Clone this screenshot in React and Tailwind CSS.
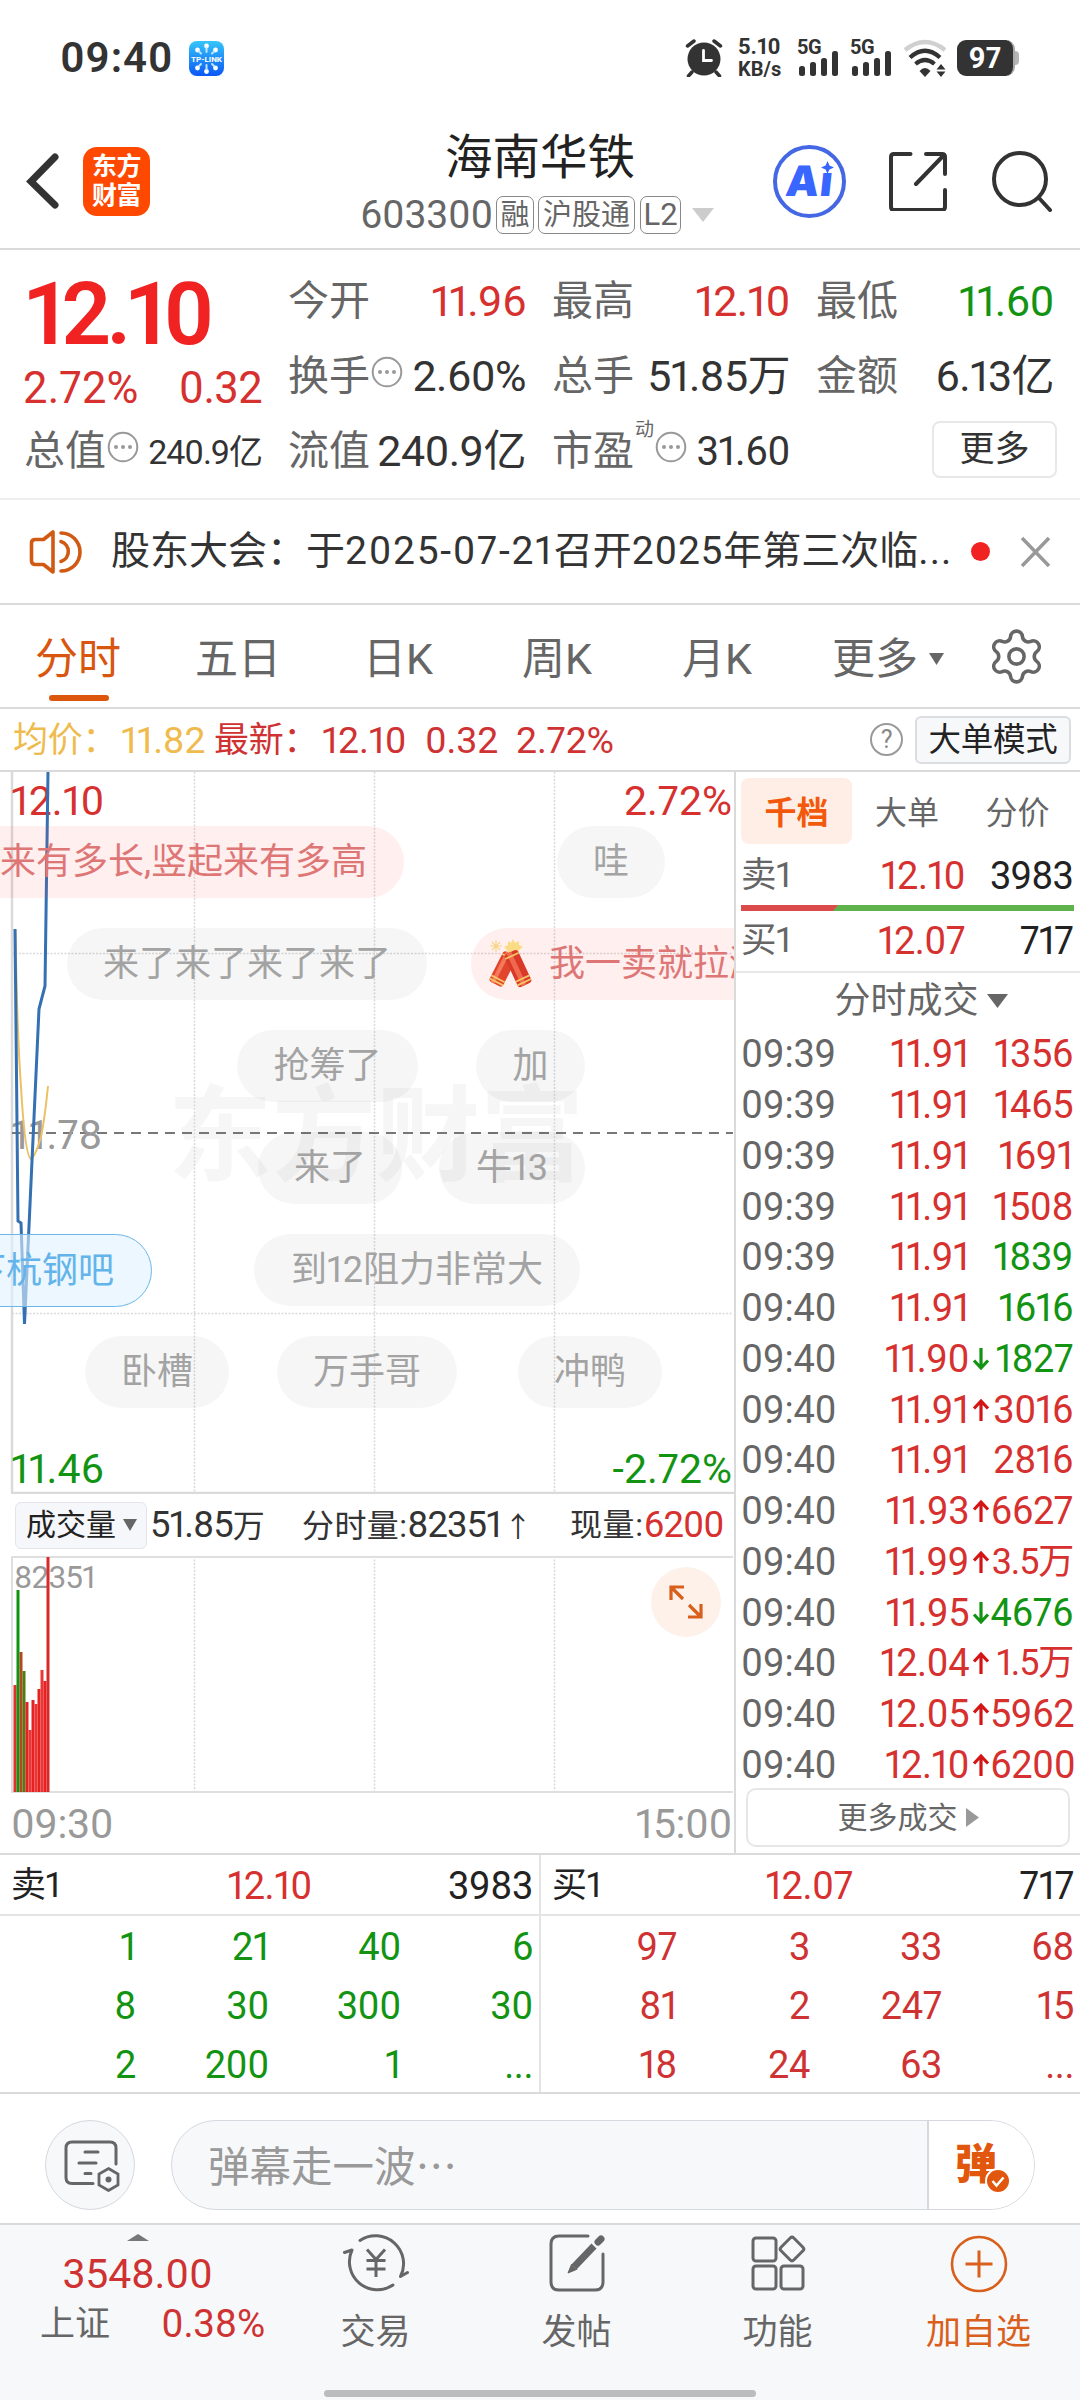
import { Settings } from 'lucide-react';

const STATS = [
  [
    { label: '今开', value: '11.96', color: 'text-[#d6302f]' },
    { label: '换手', value: '2.60%', color: 'text-[#333]', more: true },
    { label: '流值', value: '240.9亿', color: 'text-[#333]' },
  ],
  [
    { label: '最高', value: '12.10', color: 'text-[#d6302f]' },
    { label: '总手', value: '51.85万', color: 'text-[#333]' },
  ],
  [
    { label: '最低', value: '11.60', color: 'text-[#129412]' },
    { label: '金额', value: '6.13亿', color: 'text-[#333]' },
  ],
];

const TRADES = [
  ['09:39', '11.91', '', '1356', 'up'],
  ['09:39', '11.91', '', '1465', 'up'],
  ['09:39', '11.91', '', '1691', 'up'],
  ['09:39', '11.91', '', '1508', 'up'],
  ['09:39', '11.91', '', '1839', 'down'],
  ['09:40', '11.91', '', '1616', 'down'],
  ['09:40', '11.90', 'down', '1827', 'down'],
  ['09:40', '11.91', 'up', '3016', 'up'],
  ['09:40', '11.91', '', '2816', 'up'],
  ['09:40', '11.93', 'up', '6627', 'up'],
  ['09:40', '11.99', 'up', '3.5万', 'up'],
  ['09:40', '11.95', 'down', '4676', 'down'],
  ['09:40', '12.04', 'up', '1.5万', 'up'],
  ['09:40', '12.05', 'up', '5962', 'up'],
  ['09:40', '12.10', 'up', '6200', 'up'],
];

const SELL_QUEUE = ['1', '21', '40', '6', '8', '30', '300', '30', '2', '200', '1', '...'];
const BUY_QUEUE = ['97', '3', '33', '68', '81', '2', '247', '15', '18', '24', '63', '...'];

// volume bars: [top, color], one per minute
const VOLUME = [
  [129, '#e03030'], [34, '#109410'], [96, '#b04a22'], [115, '#4f7d12'], [146, '#e52222'], [174, '#ec3535'],
  [144, '#e52222'], [148, '#ec3535'], [133, '#e52222'], [114, '#ec3535'], [125, '#e52222'], [1, '#d82a2a'],
];

const BUBBLES = [
  { text: '哇', pos: 'left-[557px] top-[54px] w-[108px]' },
  { text: '来了来了来了来了', pos: 'left-[67px] top-[156px] w-[360px]' },
  { text: '抢筹了', pos: 'left-[237px] top-[258px] w-[181px]' },
  { text: '加', pos: 'left-[476px] top-[258px] w-[109px]' },
  { text: '来了', pos: 'left-[258px] top-[360px] w-[144px]' },
  { text: '牛13', pos: 'left-[439px] top-[360px] w-[146px]' },
  { text: '到12阻力非常大', pos: 'left-[254px] top-[462px] w-[326px]' },
  { text: '卧槽', pos: 'left-[85px] top-[564px] w-[144px]' },
  { text: '万手哥', pos: 'left-[277px] top-[564px] w-[180px]' },
  { text: '冲鸭', pos: 'left-[518px] top-[564px] w-[144px]' },
];

function Dots() {
  return (
    <svg className="w-[32px] h-[32px] ml-[1px] mb-[9px] shrink-0" viewBox="0 0 32 32">
      <circle cx="16" cy="16" r="14.300" fill="none" stroke="#999" strokeWidth="2" />
      <circle cx="9" cy="16" r="2" fill="#999" />
      <circle cx="16" cy="16" r="2" fill="#999" />
      <circle cx="23" cy="16" r="2" fill="#999" />
    </svg>
  );
}

function Triangle({ className, points }) {
  return (
    <svg className={className} viewBox="0 0 10 10" preserveAspectRatio="none">
      <polygon points={points} fill="currentColor" />
    </svg>
  );
}

function Signal() {
  return (
    <div className="flex flex-col w-[53px] h-[38px] relative">
      <span className="text-[20px] font-bold leading-[16px] tracking-[-0.5px]">5G</span>
      <svg className="absolute left-[2px] top-[12px] w-[42px] h-[26px]" viewBox="0 0 42 26">
        <rect x="0" y="15" width="6" height="10" rx="2.5" fill="#333" />
        <rect x="11" y="11" width="6" height="14" rx="2.5" fill="#333" />
        <rect x="22" y="7" width="6" height="18" rx="2.5" fill="#333" />
        <rect x="33" y="0" width="6" height="25" rx="2.5" fill="#333" />
      </svg>
    </div>
  );
}

function StatusBar() {
  return (
    <div className="flex h-[116px] items-center pl-[60px] text-[#333]">
      <span className="w-[129px] text-[42px] font-semibold tracking-[0.8px]">09:40</span>
      <svg className="w-[35px] h-[35px]" viewBox="0 0 35 35">
        <defs>
          <linearGradient id="tp" x1="0" y1="0" x2="0" y2="1">
            <stop offset="0" stopColor="#35c6fb" />
            <stop offset="1" stopColor="#0b57f5" />
          </linearGradient>
        </defs>
        <rect width="35" height="35" rx="8" fill="url(#tp)" />
        <g fill="#fff">
          <circle cx="17.500" cy="5" r="2.400" />
          <circle cx="8.500" cy="9" r="2.400" />
          <circle cx="26.500" cy="9" r="2.400" />
          <circle cx="8.500" cy="27" r="2.400" />
          <circle cx="26.500" cy="27" r="2.400" />
          <circle cx="17.500" cy="30.500" r="2.400" />
        </g>
        <g stroke="#bfe6ff" strokeWidth="2" strokeLinecap="round">
          <path d="M17.500 7v4M10 10.500l2 2M25 10.500l-2 2M10 25l2-2M25 25l-2-2M17.500 28v-4" />
        </g>
        <text x="17.500" y="20.500" textAnchor="middle" textLength="31" lengthAdjust="spacingAndGlyphs" fontSize="6.500" fontWeight="700" fill="#fff">TP-LINK</text>
      </svg>
      <div className="flex items-center ml-[461px] h-[38px]">
        <svg className="w-[38px] h-[38px]" viewBox="0 0 38 38" fill="none" stroke="#333" strokeLinecap="round">
          <circle cx="19" cy="20" r="16.500" fill="#333" stroke="none" />
          <path d="M2.500 7L9 2M35.500 7L29 2M7 33l-3.500 4M31 33l3.500 4" strokeWidth="3.500" />
          <path d="M18.500 11.500v10h8" stroke="#fff" strokeWidth="2.800" />
        </svg>
        <div className="flex flex-col ml-[15px] w-[59px] text-[22px] font-bold leading-[23px]">
          <span>5.10</span>
          <span className="text-[20px]">KB/s</span>
        </div>
        <Signal />
        <Signal />
        <svg className="w-[46px] h-[38px]" viewBox="0 0 46 38" fill="none" stroke="#333" strokeWidth="4.200">
          <path d="M2 11Q22 -5 42 11" stroke="#d0d0d0" />
          <path d="M7 18.500Q22 5 37 18.500" />
          <path d="M12.500 25Q22 17 31.500 25" />
          <path d="M16.500 32Q22 26 27.500 32L22 38z" fill="#333" stroke="none" />
          <path d="M33.500 30.500h9L38 25zM33.500 32.500h9L38 38z" fill="#333" stroke="none" />
        </svg>
        <div className="flex items-center ml-[8px]">
          <div className="flex items-center justify-center w-[58px] h-[36px] rounded-[9px] bg-[#333] border-r-2 border-[#aaa] text-white text-[29px] font-bold">97</div>
          <div className="w-[4px] h-[14px] rounded-r-[4px] bg-[#b5b5b5]" />
        </div>
      </div>
    </div>
  );
}

function Header() {
  return (
    <header className="flex items-center h-[134px] border-b-2 border-[#dadada] pl-[26px] pb-[2px]">
      <svg className="w-[34px] h-[58px]" viewBox="0 0 34 58" fill="none" stroke="#333" strokeWidth="7" strokeLinecap="round">
        <path d="M29 5L5 29.500L29 53" />
      </svg>
      <div className="flex flex-col items-center justify-center ml-[23px] w-[67px] h-[69px] rounded-[14px] bg-[#ff4800] text-white text-[25px] font-bold leading-[29px] tracking-[-0.5px]">
        <span>东方</span>
        <span>财富</span>
      </div>
      <div className="flex flex-col items-start ml-[154px] w-[464px] -mt-[2px]">
        <h1 className="ml-[141px] text-[47.500px] leading-[66px] text-[#222]">海南华铁</h1>
        <div className="flex items-center ml-[56px] h-[44px] pt-[4px] text-[#666]">
          <span className="mr-[4px] w-[132px] text-[39px] tracking-[-0.2px]">603300</span>
          <span className="mr-[4px] w-[38px] py-[2px] border border-[#888] rounded-[7px] text-center text-[29px] leading-[32px]">融</span>
          <span className="mr-[5px] w-[97px] py-[2px] border border-[#888] rounded-[7px] text-center text-[29px] leading-[32px]">沪股通</span>
          <span className="w-[41px] py-[2px] border border-[#888] rounded-[7px] text-center text-[31px] leading-[32px]">L2</span>
          <Triangle className="ml-[11px] w-[22px] h-[14px] text-[#ccc]" points="0,0 10,0 5,10" />
        </div>
      </div>
      <div className="relative flex items-center justify-center ml-[5px] w-[73px] h-[73px] rounded-full border-4 border-[#4468e4] text-[#3866ff]">
        <span className="font-[Inter] text-[42px] font-black tracking-[1px] -skew-x-6">Aı</span>
        <Triangle className="absolute right-[8px] top-[12px] w-[13px] h-[13px]" points="5,0 6.5,3.5 10,5 6.5,6.500 5,10 3.500,6.500 0,5 3.500,3.500" />
      </div>
      <svg className="ml-[42px] w-[60px] h-[60px]" viewBox="0 0 60 60" fill="none" stroke="#333" strokeWidth="4" strokeLinecap="round" strokeLinejoin="round">
        <path d="M22.500 3H6Q3 3 3 6v50q0 3 3 3h48q3 0 3-3V39M38 3h16q3 0 3 3v17M55 5L28 33" />
      </svg>
      <svg className="ml-[43px] w-[62px] h-[62px]" viewBox="0 0 62 62" fill="none" stroke="#333" strokeWidth="4" strokeLinecap="round">
        <circle cx="29" cy="29" r="26" />
        <path d="M48 48l11 12" />
      </svg>
    </header>
  );
}

function Quote() {
  return (
    <section className="grid grid-cols-[237px_236px_236px_236px] gap-x-[28px] h-[250px] pl-[25px] pt-[14px] border-b-2 border-[#eee]">
      <div className="flex flex-col">
        <div className="flex items-center h-[100px] text-[87px] font-semibold tracking-[-4.500px] text-[#f12222]">12.10</div>
        <div className="flex items-center justify-between h-[50px] -ml-[2px] text-[43.500px] text-[#d6302f]">
          <span className="tracking-[0.2px]">2.72%</span>
          <span className="tracking-[-0.6px]">0.32</span>
        </div>
        <div className="flex items-center h-[75px]">
          <span className="-ml-[1px] text-[41px] text-[#666]">总值</span>
          <Dots />
          <span className="ml-auto text-[34px] tracking-[-1.100px] text-[#333]">240.9亿</span>
        </div>
      </div>
      {STATS.map((col, i) => (
        <div key={i} className="flex flex-col whitespace-nowrap">
          {col.map((s) => (
            <div key={s.label} className="flex items-center h-[75px]">
              <span className="-ml-[2px] text-[41px] text-[#666]">{s.label}</span>
              {s.more && <Dots />}
              <span className={`ml-auto text-[43px] tracking-[-0.6px] ${s.color}`}>{s.value}</span>
            </div>
          ))}
          {i === 1 && (
            <div className="flex items-center h-[75px]">
              <span className="-ml-[2px] text-[41px] text-[#666]">市盈</span>
              <span className="self-start mt-[6px] ml-[1px] text-[19px] text-[#666]">动</span>
              <Dots />
              <span className="ml-auto text-[40px] tracking-[-0.6px] text-[#333]">31.60</span>
            </div>
          )}
          {i === 2 && (
            <div className="flex items-center justify-center ml-auto mt-[7px] -mr-[3px] w-[125px] h-[57px] border-2 border-[#e8e8e8] rounded-[8px] text-[35px] text-[#333]">更多</div>
          )}
        </div>
      ))}
    </section>
  );
}

function Notice() {
  return (
    <section className="flex items-center h-[105px] border-b-2 border-[#dadada] pl-[28px]">
      <svg className="w-[54px] h-[48px]" viewBox="0 0 54 48" fill="none" stroke="#d05a14" strokeWidth="3.600" strokeLinecap="round" strokeLinejoin="round">
        <path d="M25 4v40l-9.500-7.500H7.500Q3.500 36.500 3.500 33V15Q3.500 11.500 7.500 11.500H15.500z" />
        <path d="M33 13.500a10.500 10.500 0 0 1 0 20M33 5a19 19 0 0 1 0 38" />
      </svg>
      <span className="ml-[29px] w-[840px] whitespace-nowrap text-[39px] text-[#333]">
        股东大会：于<span className="tracking-[1.700px]">2025-07-21</span>召开<span className="tracking-[0.8px]">2025</span>年第三次临<span className="tracking-[1px]">...</span>
      </span>
      <span className="ml-[20px] w-[19px] h-[19px] rounded-full bg-[#f12222]" />
      <svg className="ml-[28px] w-[34px] h-[34px]" viewBox="0 0 34 34" stroke="#999" strokeWidth="3.500">
        <path d="M4 3L31 31M31 3L4 31" />
      </svg>
    </section>
  );
}

function PeriodTabs() {
  return (
    <nav className="flex items-center h-[104px] border-b-2 border-[#dadada] pl-[35px] pt-[6px] text-[43px] text-[#666]">
      <div className="relative w-[160px] text-[#d9560f]">
        分时
        <span className="absolute left-[14px] -bottom-[20px] w-[60px] h-[6px] rounded-full bg-[#dd560d]" />
      </div>
      <span className="w-[168px]">五日</span>
      <span className="w-[159px]">日K</span>
      <span className="w-[160px]">周K</span>
      <span className="w-[150px]">月K</span>
      <span>更多</span>
      <Triangle className="ml-[11px] w-[15px] h-[12px]" points="0,0 10,0 5,10" />
      <Settings className="ml-[42px] -mt-[6px] w-[61px] h-[61px]" strokeWidth={1.4} />
    </nav>
  );
}

function InfoLine() {
  return (
    <div className="flex items-center h-[63px] border-b-2 border-[#dadada] pl-[13px] pr-[9px] text-[37.500px] tracking-[-0.2px] whitespace-nowrap">
      <span className="w-[108px] pt-[2px] text-[35px] text-[#efbb4e]">均价：</span>
      <span className="w-[93px] pt-[2px] text-[#efbb4e]">11.82</span>
      <span className="w-[108px] pt-[2px] text-[35px] text-[#cf3232]">最新：</span>
      <span className="w-[103px] pt-[2px] text-[#cf3232]">12.10</span>
      <span className="w-[91px] pt-[2px] text-[#cf3232]">0.32</span>
      <span className="pt-[2px] text-[#cf3232]">2.72%</span>
      <div className="flex items-center justify-center ml-auto mr-[12px] w-[33px] h-[33px] rounded-full border-[2.5px] border-[#999] text-[25px] text-[#888]">?</div>
      <div className="flex items-center justify-center w-[156px] h-[48px] pt-[2px] rounded-[6px] border-2 border-[#dcdde0] bg-[#f7f8fa] text-[32.500px] text-[#222]">大单模式</div>
    </div>
  );
}

function Firecracker() {
  return (
    <svg className="w-[48px] h-[50px]" viewBox="0 0 48 50">
      <g stroke="#f6d58a" strokeWidth="1.200">
        <path d="M10 1v12M4 7h12M6 3l8 8M14 3l-8 8" />
      </g>
      <polygon points="27,0 29,4 33,2 33,6 37,8 33,11 32,15 27,14 22,15 21,11 18,8 22,6 22,2 25,4" fill="#fbdc85" />
      <g transform="rotate(27 17 30)">
        <rect x="9.500" y="13" width="15" height="34" rx="3" fill="#e2452e" />
        <rect x="12" y="13" width="4" height="34" fill="#f4795b" />
        <path d="M9.500 17h15M9.500 41h15M9.500 44.500h15" stroke="#f4c766" strokeWidth="1.800" />
      </g>
      <g transform="rotate(-25 31 30)">
        <rect x="24.500" y="12" width="15" height="36" rx="3" fill="#d93a28" />
        <rect x="28" y="12" width="5" height="36" fill="#f0694e" />
        <path d="M24.500 16h15M24.500 41h15M24.500 45h15" stroke="#f4c766" strokeWidth="1.800" />
      </g>
    </svg>
  );
}

function PriceChart() {
  return (
    <div className="relative h-[722px] overflow-hidden text-[41px]">
      <span className="absolute left-[168px] top-[307px] text-[104px] font-bold leading-[118px] text-[#f6f6f6]">东方财富</span>
      <svg className="absolute left-0 top-0 w-[735px] h-[722px]" viewBox="0 0 735 722" fill="none">
        <path d="M194.500 0v720M374.500 0v720M554.500 0v720M12 181.500h721M12 541.500h721" stroke="#d9d9d9" strokeWidth="1.500" strokeDasharray="2 1.500" />
        <path d="M12 0v720M11 721h724" stroke="#dadada" strokeWidth="2.500" />
        <path d="M12 361h721" stroke="#777" strokeWidth="1.800" strokeDasharray="10 7" />
      </svg>
      <span className="absolute left-[11px] top-[9px] text-[#d6302f]">12.10</span>
      <span className="absolute right-[2px] top-[9px] text-[#d6302f]">2.72%</span>
      <span className="absolute left-[11px] top-[343px] text-[#999]">11.78</span>
      <span className="absolute left-[11px] top-[677px] text-[#129412]">11.46</span>
      <span className="absolute right-[2px] top-[677px] text-[#129412]">-2.72%</span>
      <svg className="absolute left-0 top-0 w-[735px] h-[722px]" viewBox="0 0 735 722" fill="none">
        <path d="M15.500 158Q17 260 21 315Q25 384 31 387Q35 385 41 365Q45 345 48 314" stroke="#ecc163" strokeWidth="2" />
        <path d="M15 157L18 449L21 451L24.500 552L39 237L45 214L48 0" stroke="#3570b2" strokeWidth="3" />
      </svg>

      {/* danmaku layer */}
      <div className="absolute left-0 top-[54px] w-[404px] h-[72px] flex items-center rounded-r-full bg-[#fa5050]/[0.09] text-[36px] text-[#de7676] whitespace-nowrap">来有多长,竖起来有多高</div>
      <div className="absolute left-[471px] top-[156px] w-[330px] h-[72px] flex items-center gap-[15px] pl-[15px] rounded-full bg-[#fa5050]/[0.09] text-[36px] text-[#de7676] whitespace-nowrap">
        <Firecracker />
        我一卖就拉涨
      </div>
      <div className="absolute -left-[80px] top-[462px] w-[232px] h-[73px] flex items-center justify-end pr-[37px] rounded-full border-[1.500px] border-[#6bb7ea] bg-[#dff2ff]/60 text-[36px] text-[#62b4ea] whitespace-nowrap">下杭钢吧</div>
      {BUBBLES.map((b) => (
        <div key={b.text + b.pos} className={`absolute h-[72px] flex items-center justify-center rounded-full bg-black/[0.036] text-[36px] text-[#a3a3a3] whitespace-nowrap ${b.pos}`}>
          {b.text}
        </div>
      ))}
    </div>
  );
}

function VolumeChart() {
  return (
    <>
      <div className="flex items-center h-[62px] pl-[15px] text-[36.500px] tracking-[-1px] whitespace-nowrap text-[#333]">
        <div className="flex items-center w-[132px] h-[47px] pl-[10px] rounded-[6px] border border-[#e3e5ea] bg-[#f6f7fa] text-[30px] tracking-[0px] text-[#222]">
          成交量
          <Triangle className="ml-[7px] w-[14px] h-[12px] text-[#666]" points="0,0 10,0 5,10" />
        </div>
        <span className="ml-[3px] w-[152px]">51.85<span className="text-[32px]">万</span></span>
        <span className="w-[268px]"><span className="text-[32px] tracking-[0.4px]">分时量:</span>82351<span className="ml-[3px] text-[28px]">↑</span></span>
        <span className="text-[32px] tracking-[0.6px]">现量:</span>
        <span className="text-[#d6302f]">6200</span>
      </div>
      <div className="relative h-[237px]">
        <svg className="absolute left-0 top-0 w-[735px] h-[237px]" viewBox="0 0 735 237">
          <path d="M194.500 0v236M374.500 0v236M554.500 0v236" stroke="#d9d9d9" strokeWidth="1.500" strokeDasharray="2 1.500" />
          <path d="M12 1h721M12 0v236M11 236h722" stroke="#dfdfdf" strokeWidth="2" fill="none" />
        </svg>
        <span className="absolute left-[14px] top-[6px] text-[31.500px] tracking-[-0.8px] text-[#999]">82351</span>
        <svg className="absolute left-0 top-0 w-[735px] h-[237px]" viewBox="0 0 735 237">
          {VOLUME.map(([top, color], i) => (
            <rect key={i} x={13.5 + i * 3} y={top} width="3" height={236 - top} fill={color} />
          ))}
        </svg>
        <div className="absolute right-[13px] top-[11px] w-[70px] h-[70px] rounded-full bg-[#fdf1ea] flex items-center justify-center">
          <svg className="w-[36px] h-[36px]" viewBox="0 0 36 36" fill="none" stroke="#d9601c" strokeWidth="3.200">
            <path d="M3 16V3h13M3 3l12 12M33 20v13H20M33 33L21 21" />
          </svg>
        </div>
      </div>
      <div className="flex items-center justify-between h-[60px] pt-[2px] pl-[11px] pr-[2px] text-[41px] tracking-[-0.4px] text-[#999]">
        <span>09:30</span>
        <span>15:00</span>
      </div>
    </>
  );
}

function Arrow({ dir }) {
  if (!dir) return <span className="w-[18px]" />;
  return (
    <svg className={`shrink-0 w-[18px] h-[24px] ${dir === 'up' ? '' : 'rotate-180'}`} viewBox="0 0 18 24" fill="none" stroke={dir === 'up' ? '#d41515' : '#129412'} strokeWidth="3.200">
      <path d="M9 23V3M2 10.500L9 3l7 7.500" />
    </svg>
  );
}

function SidePanel() {
  return (
    <aside className="flex flex-col w-[346px] border-l-2 border-[#dadada] text-[38px] tracking-[-0.5px]">
      <div className="flex items-center mt-[6px] ml-[5px] h-[66px] text-[32px] tracking-[0px] text-[#666]">
        <span className="flex items-center justify-center w-[111px] h-[66px] pt-[3px] rounded-[8px] bg-[#feeee6] font-bold text-[#f2590c]">千档</span>
        <span className="w-[110px] pt-[3px] text-center">大单</span>
        <span className="w-[111px] pt-[3px] text-center">分价</span>
      </div>
      <div className="flex items-center h-[58px] mt-[3px] pl-[5px] pr-[7px]">
        <span className="text-[35.500px] text-[#666]">卖1</span>
        <span className="ml-auto text-[#d6302f]">12.10</span>
        <span className="w-[108px] text-right tracking-[-0.9px] text-[#222]">3983</span>
      </div>
      <svg className="ml-[5px] w-[333px] h-[6px]" viewBox="0 0 333 6">
        <rect width="333" height="6" fill="#5fb24c" />
        <polygon points="0,0 97,0 92,6 0,6" fill="#db4b4b" />
      </svg>
      <div className="flex items-center h-[60px] pl-[5px] pr-[7px]">
        <span className="text-[35.500px] text-[#666]">买1</span>
        <span className="ml-auto text-[#d6302f]">12.07</span>
        <span className="w-[108px] text-right tracking-[-0.9px] text-[#222]">717</span>
      </div>
      <div className="flex items-center justify-center h-[60px] pl-[26px] pb-[2px] border-t-2 border-[#e8e8e8] text-[36px] tracking-[0px] text-[#666]">
        分时成交
        <Triangle className="ml-[8px] w-[21px] h-[14px]" points="0,0 10,0 5,10" />
      </div>
      <div className="flex flex-col -mt-[2px]">
        {TRADES.map(([time, price, dir, vol, side], i) => (
          <div key={i} className="flex items-center h-[50.75px] pl-[5px] pr-[7px] whitespace-nowrap">
            <span className="tracking-[-0.2px] text-[#666]">{time}</span>
            <span className="ml-auto text-[#d6302f]">{price}</span>
            <div className="flex ml-[3px] items-center w-[101px]">
              <Arrow dir={dir} />
              <span className={`ml-auto ${vol.includes('万') ? 'text-[36px] tracking-[-1.200px]' : ''} ${side === 'up' ? 'text-[#d6302f]' : 'text-[#129412]'}`}>{vol}</span>
            </div>
          </div>
        ))}
      </div>
      <div className="flex items-center justify-center ml-[10px] -mt-[2px] w-[324px] h-[59px] rounded-[10px] border-2 border-[#e6e6e6] text-[30px] tracking-[0px] text-[#666]">
        更多成交
        <Triangle className="ml-[8px] w-[13px] h-[19px] text-[#999]" points="0,0 10,5 0,10" />
      </div>
    </aside>
  );
}

function Queue({ label, price, total, items, color, className }) {
  return (
    <div className={`text-[38px] tracking-[-0.4px] ${className}`}>
      <div className="flex items-center h-[61px] pt-[2px] pl-[11px] border-b-2 border-[#e4e4e4] text-[#222]">
        <span className="w-[150px] text-[35px]">{label}</span>
        <span className="w-[151px] text-right text-[#d6302f]">{price}</span>
        <span className="ml-auto pr-[6px]">{total}</span>
      </div>
      <div className={`grid grid-cols-[136px_133px_132px_1fr] h-[179px] pt-[1px] pr-[6px] items-center text-right ${color}`}>
        {items.map((n, i) => <span key={i}>{n}</span>)}
      </div>
    </div>
  );
}

function CommentBar() {
  return (
    <div className="flex items-center h-[129px] pl-[45px] pt-[13px]">
      <div className="flex items-center justify-center w-[90px] h-[90px] rounded-full border-[1.500px] border-[#d5d8de] bg-[#f7f8fa]">
        <svg className="w-[58px] h-[54px] ml-[4px]" viewBox="0 0 58 54" fill="none" stroke="#666" strokeWidth="3" strokeLinecap="round">
          <path d="M30 45.500H9Q3 45.500 3 39.500V10Q3 4 9 4h38q6 0 6 6v16" />
          <path d="M22 14h13M16 25h17M22 35.500h6" />
          <path d="M45.500 30.500l9.500 5.500v11l-9.500 5.500-9.500-5.500v-11z" strokeWidth="2.800" />
          <circle cx="45.500" cy="41.500" r="3" fill="#666" stroke="none" />
        </svg>
      </div>
      <div className="flex items-center ml-[36px] w-[864px] h-[90px] rounded-full border-[1.500px] border-[#d5d8de] bg-[#f7f8fa] overflow-hidden">
        <span className="pl-[36px] pt-[2px] flex-1 text-[41.500px] text-[#999]">弹幕走一波<span className="font-['Noto_Sans_CJK_SC']">…</span></span>
        <div className="relative w-[107px] h-[90px] border-l-2 border-[#d5d8de] bg-white flex items-center pl-[26px]">
          <span className="text-[42px] font-black text-[#e2570e]">弹</span>
          <svg className="absolute left-[56px] top-[48px] w-[26px] h-[26px]" viewBox="0 0 26 26">
            <circle cx="13" cy="13" r="12" fill="#e2570e" stroke="#fff" strokeWidth="2" />
            <path d="M7.500 13l4 4.500 7-8" fill="none" stroke="#fff" strokeWidth="2.500" />
          </svg>
        </div>
      </div>
    </div>
  );
}

function NavItem({ label, className, children }) {
  return (
    <div className={`flex flex-col items-center w-[201px] pt-[7px] text-[35px] ${className}`}>
      <svg className="w-[66px] h-[62px]" viewBox="0 0 66 62" fill="none" stroke="currentColor" strokeWidth="3" strokeLinecap="round" strokeLinejoin="round">
        {children}
      </svg>
      <span className="mt-[21px]">{label}</span>
    </div>
  );
}

function BottomNav() {
  return (
    <nav className="flex flex-col h-[177px] border-t-2 border-[#dadada] bg-[#f7f8fa]">
      <div className="flex flex-1">
        <div className="flex flex-col items-center w-[275px] pt-[9px] text-[#cf3232]">
          <Triangle className="w-[22px] h-[7px] text-[#777]" points="0,10 5,0 10,10" />
          <span className="mt-[13px] text-[41px] tracking-[-0.2px]">3548.00</span>
          <div className="flex items-center justify-between w-[225px] mt-[10px] ml-[30px]">
            <span className="text-[35px] text-[#666]">上证</span>
            <span className="text-[38.500px] tracking-[-0.2px]">0.38%</span>
          </div>
        </div>
        <NavItem label="交易" className="text-[#666]">
          <path d="M17 8.500A28 28 0 0 1 57.500 44.500L64.500 40.500M50 53A28 28 0 0 1 9 18L1.500 20.500" />
          <path d="M24 17.500L33 27.500l9-10M23.500 28.500h19M23.500 37h19M33 28v17" strokeLinecap="butt" />
        </NavItem>
        <NavItem label="发帖" className="text-[#666]">
          <path d="M44 4H15Q7 4 7 12v38q0 8 8 8h36q8 0 8-8V22" />
          <path d="M50 14L30 35" strokeWidth="7" strokeLinecap="butt" />
          <path d="M27.500 32.500L24 41l8.500-3.500z" fill="currentColor" strokeWidth="1" />
          <path d="M54 10l3-3" strokeWidth="7" />
        </NavItem>
        <NavItem label="功能" className="text-[#666]">
          <rect x="8" y="6" width="23" height="23" rx="3" />
          <rect x="8" y="34" width="23" height="23" rx="3" />
          <rect x="36" y="34" width="22" height="23" rx="3" />
          <rect x="38" y="8" width="18" height="18" rx="2.500" transform="rotate(45 47 17)" />
        </NavItem>
        <NavItem label="加自选" className="text-[#d9601c]">
          <circle cx="33" cy="32" r="27" strokeWidth="2.600" />
          <path d="M33 18.500v27M19.500 32h27" strokeLinecap="butt" />
        </NavItem>
      </div>
      <div className="mx-auto mb-[3px] w-[432px] h-[7px] rounded-full bg-[#bbbcbe]" />
    </nav>
  );
}

export default function App() {
  return (
    <div className="flex flex-col w-[1080px] h-[2400px] overflow-hidden bg-white font-[Roboto,'Noto_Sans_CJK_SC',sans-serif] leading-none proportional-nums">
      <StatusBar />
      <Header />
      <Quote />
      <Notice />
      <PeriodTabs />
      <InfoLine />
      <div className="flex h-[1083px] border-b-2 border-[#dadada]">
        <div className="w-[734px]">
          <PriceChart />
          <VolumeChart />
        </div>
        <SidePanel />
      </div>
      <div className="flex h-[239px] border-b-2 border-[#dadada]">
        <Queue label="卖1" price="12.10" total="3983" items={SELL_QUEUE} color="text-[#129412]" className="w-[541px] border-r-2 border-[#e4e4e4]" />
        <Queue label="买1" price="12.07" total="717" items={BUY_QUEUE} color="text-[#cf3232]" className="w-[539px]" />
      </div>
      <CommentBar />
      <BottomNav />
    </div>
  );
}
